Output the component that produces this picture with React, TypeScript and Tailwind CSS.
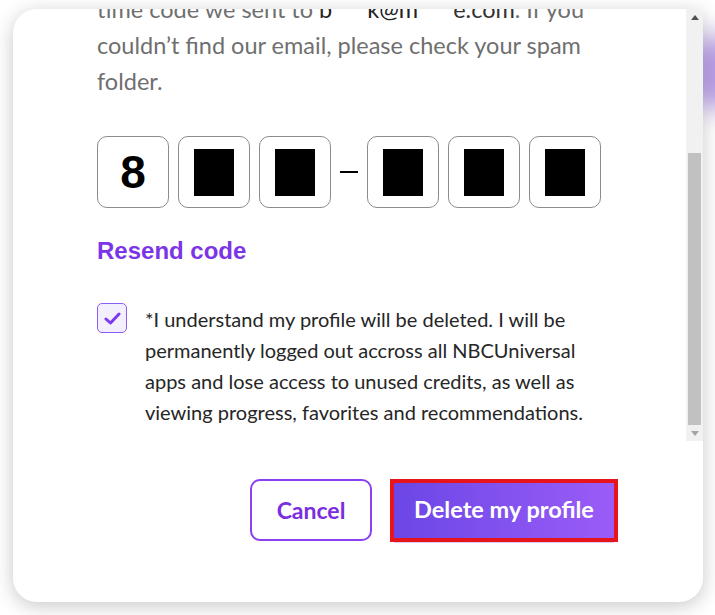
import React from 'react';

const digits = ['8', '', ''];
const digits2 = ['', '', ''];

const CodeBox = ({ value }: { value: string }) => (
  <div className="w-[72px] h-[72px] rounded-[10px] border border-[#8c8c8c] bg-white flex items-center justify-center">
    {value ? (
      <span className="text-[46px] font-bold leading-none text-black" style={{ fontFamily: '"Liberation Sans", Arial, sans-serif' }}>
        {value}
      </span>
    ) : (
      <div className="w-[40px] h-[47px] bg-black" />
    )}
  </div>
);

const Scrollbar = () => (
  <div className="w-[17px] h-full bg-[#f1f1f1] flex flex-col items-center">
    <div className="h-[17px] w-full flex items-center justify-center">
      <svg width="8" height="5" viewBox="0 0 8 5">
        <path d="M0 5 L4 0 L8 5 Z" fill="#505050" />
      </svg>
    </div>
    <div className="h-[127px]" />
    <div className="w-[13px] h-[272px] bg-[#c1c1c1]" />
    <div className="h-[16px] w-full flex items-center justify-center">
      <svg width="8" height="5" viewBox="0 0 8 5">
        <path d="M0 0 L8 0 L4 5 Z" fill="#a3a3a3" />
      </svg>
    </div>
  </div>
);

const App = () => {
  const body = { fontFamily: 'Lato, "Open Sans", sans-serif' };

  return (
    <div className="relative w-[715px] h-[615px] bg-white overflow-hidden pl-[13px] pt-[9px]">
      <div className="absolute left-[690px] top-[35px] w-[60px] h-[75px] rounded-full bg-[#b89ce8] blur-[12px]" />
      <div
        className="relative z-10 w-[690px] h-[593px] bg-white rounded-[24px] rounded-tr-[6px] overflow-hidden flex flex-col shadow-[0_4px_20px_rgba(0,0,0,0.22)]"
        style={body}
      >
        <div className="h-[432px] flex shrink-0">
          <div className="flex-1 overflow-hidden pl-[84px]">
            <p className="-mt-[18px] text-[23.5px] leading-[36px] text-[#6f6f6f]">
              <span className="block whitespace-nowrap">
                time code we sent to <span className="text-[#222]">b</span>
                <span className="inline-block w-[35px]" />
                <span className="text-[#222]">k@m</span>
                <span className="inline-block w-[35px]" />
                <span className="text-[#333]">e.com</span>. If you
              </span>
              <span className="block whitespace-nowrap">couldn’t find our email, please check your spam</span>
              <span className="block whitespace-nowrap">folder.</span>
            </p>

            <div className="mt-[37px] flex items-center gap-[9px]">
              {digits.map((d, i) => (
                <CodeBox key={'a' + i} value={d} />
              ))}
              <div className="w-[18px] h-[2px] bg-black" />
              {digits2.map((d, i) => (
                <CodeBox key={'b' + i} value={d} />
              ))}
            </div>

            <div
              className="mt-[29px] text-[24px] leading-[28px] font-bold text-[#7b35e6]"
              style={{ fontFamily: '"Liberation Sans", Arial, sans-serif' }}
            >
              Resend code
            </div>

            <div className="mt-[38px] flex items-start gap-[18px]">
              <div className="w-[30px] h-[30px] shrink-0 rounded-[5px] border-[1.5px] border-[#8b5cf6] bg-[#f4efff] flex items-center justify-center">
                <svg width="17" height="13" viewBox="0 0 17 13" fill="none">
                  <path d="M2 7 L6.5 11 L15 2" stroke="#7c3aed" strokeWidth="3" strokeLinecap="round" strokeLinejoin="round" />
                </svg>
              </div>
              <p className="mt-[1px] text-[20px] leading-[31px] text-[#262626]">
                <span className="block whitespace-nowrap">*I understand my profile will be deleted. I will be</span>
                <span className="block whitespace-nowrap">permanently logged out accross all NBCUniversal</span>
                <span className="block whitespace-nowrap">apps and lose access to unused credits, as well as</span>
                <span className="block whitespace-nowrap">viewing progress, favorites and recommendations.</span>
              </p>
            </div>
          </div>
          <Scrollbar />
        </div>

        <div className="flex justify-end items-center gap-[22px] pt-[38px] pr-[89px]">
          <button className="w-[122px] h-[62px] rounded-[10px] border-2 border-[#8a3ff0] bg-white text-[23px] font-bold text-[#7a2ee0]">
            Cancel
          </button>
          <button className="w-[220px] h-[55px] bg-gradient-to-r from-[#6b46e6] to-[#9b5cf7] text-[23.5px] font-bold text-white outline-4 outline-[#e8141c] shadow-[0_5px_0_#d9ccfb]">
            Delete my profile
          </button>
        </div>
      </div>
    </div>
  );
};

export default App;
